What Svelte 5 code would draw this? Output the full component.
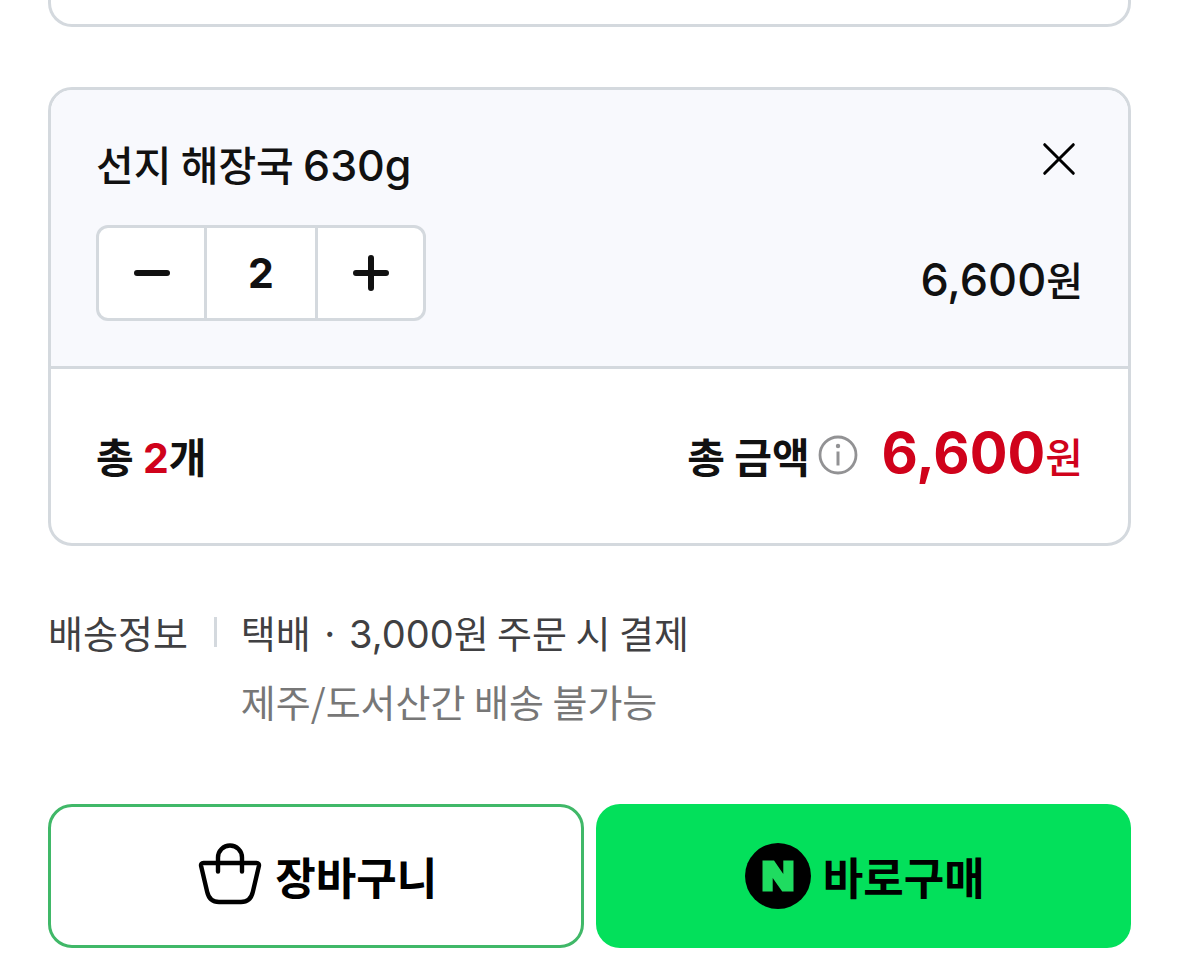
<script lang="ts">
	const unitPrice = 3300;
	const shippingFee = 3000;

	let count: number = $state(2);
	let removed: boolean = $state(false);

	const total = $derived(unitPrice * count);

	function format(value: number) {
		return value.toLocaleString('en-US');
	}

	function decrease() {
		if (count > 1) count -= 1;
	}

	function increase() {
		count += 1;
	}

	function handleInput(event: Event) {
		const value = parseInt((event.target as HTMLInputElement).value, 10);
		if (value > 0) count = value;
	}
</script>

<main class="order">
	<div class="option-box"></div>

	{#if !removed}
		<section class="card">
			<div class="item">
				<div class="item-head">
					<h2>선지 해장국 <span class="num">630g</span></h2>
					<button class="close" type="button" aria-label="삭제" onclick={() => (removed = true)}>
						<svg viewBox="0 0 48 48" width="48" height="48">
							<path d="M9.700 9.700l28.600 28.600M38.300 9.700L9.700 38.300" stroke="#000" stroke-width="3" stroke-linecap="round" />
						</svg>
					</button>
				</div>
				<div class="item-body">
					<div class="stepper">
						<button type="button" aria-label="수량 빼기" onclick={decrease}>
							<svg viewBox="0 0 36 36" width="36" height="36">
								<path d="M3 18h30" stroke="#111" stroke-width="6" stroke-linecap="round" />
							</svg>
						</button>
						<input type="text" inputmode="numeric" aria-label="수량" value={count} onchange={handleInput} />
						<button type="button" aria-label="수량 더하기" onclick={increase}>
							<svg viewBox="0 0 36 36" width="36" height="36">
								<path d="M3 18h30M18 3v30" stroke="#111" stroke-width="6" stroke-linecap="round" />
							</svg>
						</button>
					</div>
					<p class="price"><span class="num">{format(total)}</span>원</p>
				</div>
			</div>

			<div class="total">
				<p class="total-count">총 <em class="num">{count}</em>개</p>
				<div class="total-price">
					<span>총 금액</span>
					<button class="info" type="button" aria-label="총 금액 안내">
						<svg viewBox="0 0 40 40" width="40" height="40">
							<circle cx="20" cy="20" r="18" fill="none" stroke="#929294" stroke-width="2.800" />
							<circle cx="20" cy="11" r="2.200" fill="#929294" />
							<path d="M20 16.500v14" stroke="#929294" stroke-width="3" />
						</svg>
					</button>
					<strong><span class="num">{format(total)}</span><span class="won">원</span></strong>
				</div>
			</div>
		</section>
	{/if}

	<dl class="shipping">
		<dt>배송정보</dt>
		<dd>
			<p>택배 · <span class="num">{format(shippingFee)}</span>원 주문 시 결제</p>
			<p class="notice">제주/도서산간 배송 불가능</p>
		</dd>
	</dl>

	<div class="actions">
		<button class="cart" type="button">
			<svg viewBox="0 0 66 66" width="66" height="66" fill="none" stroke="#000" stroke-width="4.400" stroke-linecap="round" stroke-linejoin="round">
				<path d="M6.500 20h53q3 0 2.400 3L55.800 49Q53.500 59 44 59H22Q12.500 59 10.200 49L4.100 23Q3.500 20 6.500 20z" />
				<path d="M21 28.500V14.500a12 12 0 0 1 24 0v14" />
			</svg>
			장바구니
		</button>
		<button class="buy" type="button">
			<svg viewBox="0 0 66 66" width="66" height="66">
				<circle cx="33" cy="33" r="33" fill="#000" />
				<path d="M17.500 17.500h11.500l9.300 13.500V17.500h10.200v31H37.200L27.700 35v13.500H17.500z" fill="#1fdc60" />
			</svg>
			바로구매
		</button>
	</div>
</main>

<style>
	:global(body) {
		background: #fff;
	}

	.order {
		padding: 0 48px 12px;
		font-family: 'Noto Sans CJK KR', sans-serif;
		color: #111;
	}

	h2,
	p,
	dl,
	dd {
		margin: 0;
	}

	button,
	input {
		padding: 0;
		border: 0;
		background: none;
		color: inherit;
		font-family: inherit;
	}

	button {
		display: flex;
		align-items: center;
		justify-content: center;
		cursor: pointer;
	}

	svg {
		display: block;
		flex: none;
	}

	.num {
		font-family: Inter, 'Noto Sans CJK KR', sans-serif;
		font-style: normal;
		line-height: 1;
	}

	.option-box {
		height: 24px;
		margin-bottom: 60px;
		border: 3px solid #d4d9de;
		border-top: 0;
		border-radius: 0 0 24px 24px;
	}

	.card {
		border: 3px solid #d4d9de;
		border-radius: 24px;
		overflow: hidden;
	}

	.item {
		padding: 45px;
		background: #f8f9fd;
		border-bottom: 3px solid #d4d9de;
	}

	.item-head {
		display: flex;
		align-items: flex-start;
		justify-content: space-between;
		margin-bottom: 34px;
	}

	h2 {
		font-size: 41px;
		font-weight: 500;
		line-height: 56px;
	}

	h2 .num {
		font-size: 43px;
	}

	.item-body {
		display: flex;
		align-items: flex-end;
		justify-content: space-between;
	}

	.stepper {
		display: flex;
		height: 90px;
		border: 3px solid #d4d9de;
		border-radius: 12px;
		background: #fff;
		overflow: hidden;
	}

	.stepper button {
		width: 105px;
	}

	.stepper input {
		box-sizing: border-box;
		width: 114px;
		border: solid #d4d9de;
		border-width: 0 3px;
		font-family: Inter, sans-serif;
		font-size: 41px;
		font-weight: 700;
		text-align: center;
	}

	.price {
		font-size: 40px;
		font-weight: 500;
		line-height: 84px;
	}

	.price .num {
		font-size: 45px;
	}

	.total {
		display: flex;
		align-items: center;
		justify-content: space-between;
		padding: 56px 45px 58px;
		font-size: 41px;
		font-weight: 700;
		line-height: 60px;
	}

	.total-count em {
		color: #d0021b;
	}

	.total-price {
		display: flex;
		align-items: center;
	}

	.info {
		margin: 0 24px 0 8px;
	}

	.total-price strong {
		color: #d0021b;
		font-weight: 700;
	}

	.total-price strong .num {
		font-size: 56px;
	}

	.total-price .won {
		font-weight: 500;
	}

	.shipping {
		display: flex;
		margin: 51px 0 69px;
		color: #404042;
		font-size: 38px;
		line-height: 69px;
	}

	dt {
		display: flex;
		align-items: center;
		height: 69px;
	}

	dt::after {
		content: '';
		width: 3px;
		height: 30px;
		margin: 0 24px 0 26px;
		background: #d4d9de;
	}

	.notice {
		color: #777;
	}

	.actions {
		display: grid;
		grid-template-columns: 1fr 1fr;
		gap: 12px;
	}

	.actions button {
		height: 144px;
		padding-left: 3px;
		gap: 12px;
		border-radius: 24px;
		color: #000;
		font-size: 44px;
		font-weight: 700;
	}

	.actions .cart {
		border: 3px solid #40b868;
	}

	.actions .buy {
		background: #03e05b;
	}
</style>
